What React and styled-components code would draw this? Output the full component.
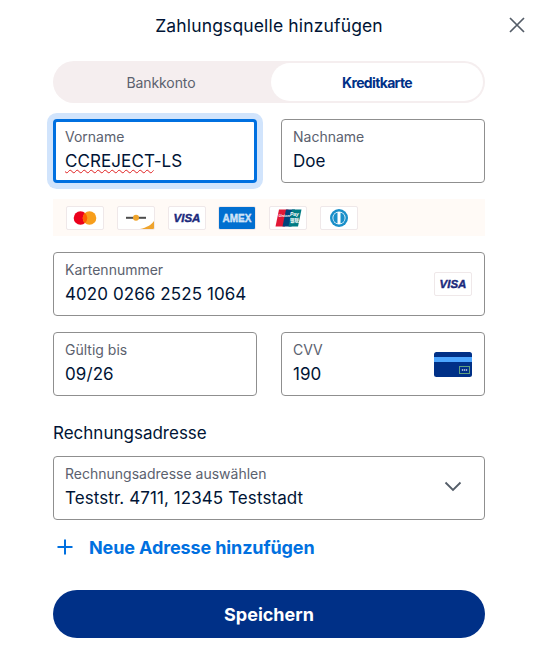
import React from 'react';
import styled, {createGlobalStyle} from 'styled-components';

const GlobalStyle = createGlobalStyle`
  html, body{
    margin: 0;
    padding: 0;
    background: #fff;
    font-family: Inter, "Noto Sans", sans-serif;
    color: #001435;
  }
  *{ box-sizing: border-box; }
`

const Modal = styled.div`
  width: 542px;
  height: 666px;
  padding: 0 57px 0 53px;
  overflow: hidden;
`

const Header = styled.header`
  position: relative;
  height: 61px;
  padding-top: 15px;
  text-align: center;
  font-size: 17.5px;
  line-height: 22px;
  font-weight: 400;
  letter-spacing: 0.15px;
`

const CloseBtn = styled.button`
  position: absolute;
  top: 16px;
  right: -41px;
  width: 18px;
  height: 18px;
  padding: 0;
  border: none;
  background: none;
  display: flex;
`

const Tabs = styled.div`
  display: grid;
  grid-template-columns: 1fr 1fr;
  height: 42px;
  padding: 2px;
  border-radius: 21px;
  background: #f5eeef;
  margin-bottom: 16px;
`

const Tab = styled.div`
  display: flex;
  align-items: center;
  justify-content: center;
  border-radius: 19px;
  font-size: 14px;
  background: ${p => p.$active ? '#fff' : 'transparent'};
  color: ${p => p.$active ? '#003087' : '#5b616e'};
  font-weight: ${p => p.$active ? 700 : 400};
  letter-spacing: ${p => p.$active ? '-0.65px' : '-0.1px'};
  margin-left: ${p => p.$active ? '2px' : '0'};
  padding-right: ${p => p.$active ? '0' : '2px'};
`

const Row = styled.div`
  display: grid;
  grid-template-columns: 204px 204px;
  justify-content: space-between;
  margin-bottom: 16px;
`

const Field = styled.div`
  position: relative;
  height: 64px;
  padding: 8px 11px 0;
  border: 1px solid #8f8f8f;
  border-radius: 4px;
  background: #fff;
  margin-bottom: ${p => p.$mb || 0};
  ${p => p.$focus && `
    border: 3px solid #0070e0;
    padding: 6px 9px 0;
    box-shadow: 0 0 0 6px #d1e4fc;
  `}
`

const Label = styled.div`
  font-size: 14px;
  line-height: 18px;
  color: #5b616e;
`

const Value = styled.div`
  font-size: 17px;
  line-height: 24px;
  margin-top: 3px;
  letter-spacing: 0.08px;
  color: #001435;
`

const Misspelled = styled.span`
  text-decoration: underline wavy #e02020 1px;
  text-underline-offset: 2px;
  text-decoration-skip-ink: none;
`

const CardBand = styled.div`
  display: flex;
  align-items: center;
  gap: 12.8px;
  height: 37px;
  padding-left: 13px;
  background: #fffaf6;
  margin-bottom: 16px;
`

const Chip = styled.div`
  flex: none;
  width: 38px;
  height: 24px;
  border: 1px solid #efe8e9;
  border-radius: 2px;
  background: #fff;
  overflow: hidden;
  display: flex;
`

const FieldIcon = styled.div`
  position: absolute;
  top: ${p => p.$top};
  right: ${p => p.$right || '12px'};
`

const SectionTitle = styled.h3`
  margin: 26px 0 12px;
  font-size: 17px;
  line-height: 22px;
  font-weight: 400;
`

const AddLink = styled.a`
  display: flex;
  align-items: center;
  gap: 15px;
  height: 54px;
  padding-left: 3px;
  font-size: 18px;
  font-weight: 700;
  letter-spacing: -0.12px;
  color: #0070e0;
`

const SaveBtn = styled.button`
  display: block;
  width: 100%;
  height: 48px;
  margin-top: 16px;
  padding: 0;
  border: none;
  border-radius: 24px;
  background: #003087;
  color: #fff;
  font-family: inherit;
  font-size: 18px;
  font-weight: 700;
`

const VisaMark = () => (
  <svg width="36" height="22" viewBox="0 0 36 22">
    <text x="18" y="15.300" textAnchor="middle" fontFamily="Liberation Sans" fontStyle="italic" fontWeight="700" fontSize="11.500" stroke="#1a2a7c" strokeWidth="0.4" fill="#1a2a7c">VISA</text>
  </svg>
);

const Mastercard = () => (
  <svg width="36" height="22" viewBox="0 0 36 22">
    <circle cx="13.500" cy="11" r="6.800" fill="#eb001b"/>
    <circle cx="22.500" cy="11" r="6.800" fill="#f79e1b"/>
    <path d="M18 5.900a6.800 6.800 0 0 1 0 10.200a6.800 6.800 0 0 1 0-10.200z" fill="#ff5f00"/>
  </svg>
);

const Maestro = () => (
  <svg width="36" height="22" viewBox="0 0 36 22">
    <rect x="8" y="9.800" width="20" height="2" fill="#4d4d4d"/>
    <circle cx="18" cy="10.800" r="3" fill="#f0a52c"/>
    <path d="M22 22C29 20.500 33 18 36 14V22Z" fill="#eea32d"/>
  </svg>
);

const Amex = () => (
  <svg width="38" height="24" viewBox="0 0 38 24" style={{margin: '-1px', flex: 'none'}}>
    <rect width="38" height="24" fill="#016fd0"/>
    <text x="19" y="15.500" textAnchor="middle" fontFamily="Liberation Sans" fontWeight="700" fontSize="10" fill="#b9d9f5" stroke="#fff" strokeWidth="0.3">AMEX</text>
  </svg>
);

const UnionPay = () => (
  <svg width="36" height="22" viewBox="0 0 36 22">
    <path d="M9 2.500h9.500L15 19.500H5.500z" fill="#e21836"/>
    <path d="M16 2.500h9L21.500 19.500h-9z" fill="#00447c"/>
    <path d="M22 2.500h9.500L28 19.500h-9.500z" fill="#007b84"/>
    <text x="8.500" y="10" fontFamily="Liberation Sans" fontStyle="italic" fontWeight="700" fontSize="4" fill="#fff">Union</text>
    <text x="20" y="9" fontFamily="Liberation Sans" fontStyle="italic" fontWeight="700" fontSize="5" fill="#fff">Pay</text>
    <text x="20" y="14.500" fontFamily="Noto Sans CJK SC, sans-serif" fontWeight="700" fontSize="4.500" fill="#fff">银联</text>
  </svg>
);

const Diners = () => (
  <svg width="36" height="22" viewBox="0 0 36 22">
    <circle cx="18" cy="11" r="9" fill="#1a8fc9"/>
    <circle cx="18" cy="11" r="6.500" fill="#fff"/>
    <path d="M16.500 5.500v11a5.700 5.700 0 0 1 0-11zM19.500 5.500a5.700 5.700 0 0 1 0 11z" fill="#1a8fc9"/>
  </svg>
);

const CvvCard = () => (
  <svg width="38" height="25" viewBox="0 0 38 25" style={{display: 'block'}}>
    <rect width="38" height="25" rx="2.500" fill="#003087"/>
    <rect y="5" width="38" height="5" fill="#4da6ff"/>
    <rect x="25.500" y="14.500" width="10" height="7" fill="#003087" stroke="#5f9f7f" strokeWidth="1"/>
    <circle cx="28.500" cy="18" r="0.800" fill="#e6eef8"/>
    <circle cx="30.500" cy="18" r="0.800" fill="#e6eef8"/>
    <circle cx="32.500" cy="18" r="0.800" fill="#e6eef8"/>
  </svg>
);

function App() {
  return (
    <Modal>
      <GlobalStyle />
      <Header>
        Zahlungsquelle hinzufügen
        <CloseBtn type="button" aria-label="Schliessen">
          <svg width="18" height="18" viewBox="0 0 18 18" fill="none" stroke="#545d68" strokeWidth="1.700">
            <path d="M2 2l14 14M16 2L2 16"/>
          </svg>
        </CloseBtn>
      </Header>

      <Tabs>
        <Tab>Bankkonto</Tab>
        <Tab $active>Kreditkarte</Tab>
      </Tabs>

      <Row>
        <Field $focus>
          <Label>Vorname</Label>
          <Value><Misspelled>CCREJECT</Misspelled>-LS</Value>
        </Field>
        <Field>
          <Label>Nachname</Label>
          <Value>Doe</Value>
        </Field>
      </Row>

      <CardBand>
        <Chip><Mastercard /></Chip>
        <Chip><Maestro /></Chip>
        <Chip><VisaMark /></Chip>
        <Chip><Amex /></Chip>
        <Chip><UnionPay /></Chip>
        <Chip><Diners /></Chip>
      </CardBand>

      <Field $mb="16px">
        <Label>Kartennummer</Label>
        <Value>4020 0266 2525 1064</Value>
        <FieldIcon $top="19px">
          <Chip><VisaMark /></Chip>
        </FieldIcon>
      </Field>

      <Row>
        <Field>
          <Label>Gültig bis</Label>
          <Value>09/26</Value>
        </Field>
        <Field>
          <Label>CVV</Label>
          <Value>190</Value>
          <FieldIcon $top="19px">
            <CvvCard />
          </FieldIcon>
        </Field>
      </Row>

      <SectionTitle>Rechnungsadresse</SectionTitle>

      <Field>
        <Label>Rechnungsadresse auswählen</Label>
        <Value>Teststr. 4711, 12345 Teststadt</Value>
        <FieldIcon $top="24px" $right="22px">
          <svg width="18" height="11" viewBox="0 0 18 11" fill="none" stroke="#545d68" strokeWidth="1.800" style={{display: 'block'}}>
            <path d="M1.500 1.500L9 9l7.500-7.500"/>
          </svg>
        </FieldIcon>
      </Field>

      <AddLink>
        <svg width="18" height="18" viewBox="0 0 18 18" fill="none" stroke="#0070e0" strokeWidth="2">
          <path d="M9 1.500v15M1.500 9h15"/>
        </svg>
        Neue Adresse hinzufügen
      </AddLink>

      <SaveBtn type="button">Speichern</SaveBtn>
    </Modal>
  );
}

export default App;
